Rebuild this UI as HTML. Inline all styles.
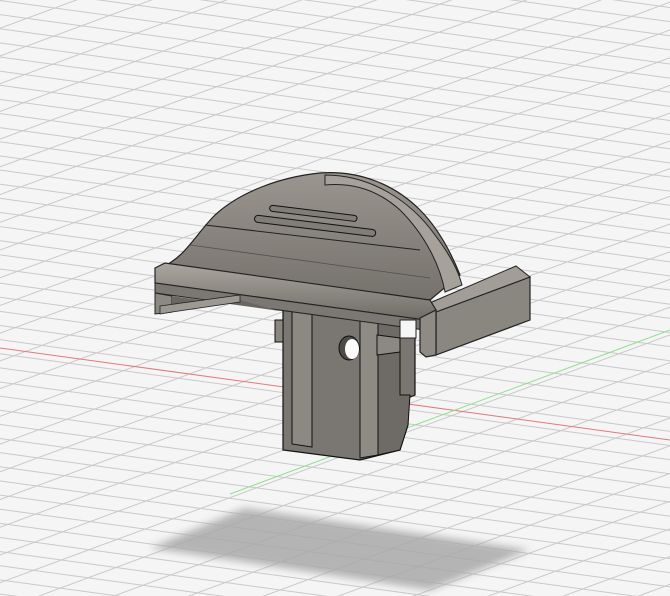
<!DOCTYPE html>
<html><head><style>html,body{margin:0;padding:0;background:#f5f5f5}svg{display:block}</style></head><body>
<svg width="670" height="596" viewBox="0 0 670 596" xmlns="http://www.w3.org/2000/svg">
<defs>
<pattern id="pa" width="2000" height="14" patternUnits="userSpaceOnUse" patternTransform="rotate(7.8)">
<rect x="0" y="0" width="2000" height="1" fill="#c9c9c9"/></pattern>
<pattern id="pb" width="2000" height="26" patternUnits="userSpaceOnUse" patternTransform="rotate(-20.3)">
<rect x="0" y="0" width="2000" height="1" fill="#c9c9c9"/></pattern>
<filter id="bl"><feGaussianBlur stdDeviation="4"/></filter>
<linearGradient id="dome" x1="0" y1="0" x2="0" y2="1"><stop offset="0" stop-color="#9a968f"/><stop offset="1" stop-color="#75716b"/></linearGradient>
<linearGradient id="rail" x1="0" y1="0" x2="0" y2="1"><stop offset="0" stop-color="#aba7a0"/><stop offset="0.5" stop-color="#8c8882"/><stop offset="1" stop-color="#6f6b66"/></linearGradient>
</defs>
<rect width="670" height="596" fill="#f5f5f5"/>
<rect width="670" height="596" fill="url(#pa)"/>
<rect width="670" height="596" fill="url(#pb)"/>
<line x1="0" y1="348" x2="670" y2="440" stroke="#e07a7a" stroke-width="1"/>
<line x1="230" y1="494" x2="670" y2="330" stroke="#8fe08f" stroke-width="1"/>
<polygon points="245,508 530,550 430,590 150,548" fill="#a9a9a9" opacity="0.85" filter="url(#bl)"/>
<!-- stem -->
<polygon points="283,300 415,305 415,395 408,398 408,425 400,450 360,460 283,450" fill="#7a7671" stroke="#111" stroke-width="1.2"/>
<polygon points="292,305 312,308 312,447 292,444" fill="#8c8882" stroke="#111" stroke-width="1"/>
<polygon points="360,310 378,312 378,455 360,458" fill="#8e8a84" stroke="#111" stroke-width="1"/>
<polygon points="378,312 400,315 400,395 410,395 408,425 400,450 378,455" fill="#6e6a65" stroke="#111" stroke-width="1"/>
<ellipse cx="349" cy="348" rx="10" ry="12" fill="#4e4b47" stroke="#111"/>
<ellipse cx="352" cy="349" rx="7" ry="10" fill="#fafafa"/>
<polygon points="377,335 400,338 400,352 377,355" fill="#8c8882" stroke="#111"/>
<rect x="275" y="320" width="8" height="22" fill="#8a8680" stroke="#111"/>
<!-- dome -->
<path d="M160,268 C185,258 195,235 215,215 C240,192 280,177 320,173 C360,170 395,185 420,210 C440,230 452,255 460,275 L430,300 L165,270 Z" fill="url(#dome)" stroke="#222" stroke-width="1.2"/>
<path d="M325,175 C370,175 410,200 435,235 C450,255 458,270 462,285 L445,292 C440,265 425,235 400,210 C380,192 355,182 325,185 Z" fill="#a6a29b" stroke="#222" stroke-width="1"/>
<path d="M205,225 L420,250" stroke="#222" stroke-width="1" fill="none"/>
<path d="M190,245 L430,278" stroke="#333" stroke-width="0.8" fill="none" opacity="0.6"/>
<rect x="270" y="205" width="88" height="6" rx="3" transform="rotate(7 270 205)" fill="#807c76" stroke="#111"/>
<rect x="255" y="215" width="122" height="7" rx="3.5" transform="rotate(7 255 215)" fill="#807c76" stroke="#111"/>
<!-- right rail -->
<polygon points="436,312 530,277 530,320 436,355" fill="#8a8680" stroke="#222" stroke-width="1.2"/>
<polygon points="425,305 516,266 530,277 436,312" fill="#a29e97" stroke="#222" stroke-width="1"/>
<!-- front rail -->
<polygon points="155,268 165,263 430,300 436,310 425,320 155,283" fill="url(#rail)" stroke="#222" stroke-width="1.2"/>
<polygon points="155,283 425,320 425,330 155,293" fill="#7b7772" stroke="#222" stroke-width="1"/>
<!-- left opening -->
<polygon points="155,293 172,296 172,312 155,314" fill="#8c8882" stroke="#222"/>
<polygon points="172,296 280,311 240,300 172,305" fill="#6a6661"/>
<polygon points="160,306 240,295 240,302 172,312 160,314" fill="#9c9892" stroke="#222" stroke-width="0.8"/>
<!-- right end corner -->
<polygon points="420,318 436,310 436,355 426,357 420,352" fill="#8e8a84" stroke="#222" stroke-width="1.2"/>
<rect x="400" y="320" width="16" height="18" fill="#f6f6f6" stroke="#222"/>
</svg>
</body></html>
